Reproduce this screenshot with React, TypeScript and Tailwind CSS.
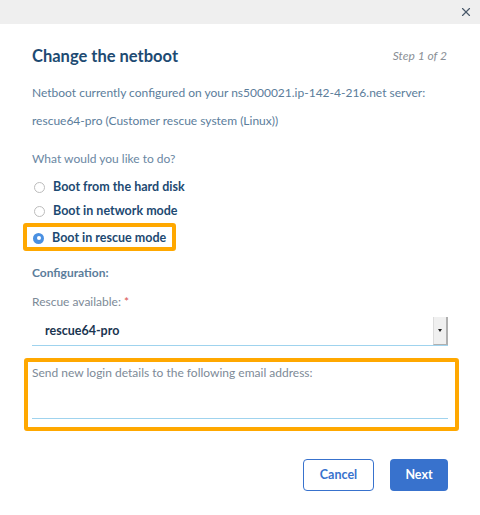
import { X } from 'lucide-react'

const Radio = ({ label, checked }: { label: string; checked?: boolean }) => (
  <label className="flex h-[16px] items-center gap-[8px] pl-[1px]">
    {checked ? (
      <span className="flex h-[11px] w-[11px] items-center justify-center rounded-full bg-[#4a90e2]">
        <span className="h-[4px] w-[4px] rounded-full bg-white" />
      </span>
    ) : (
      <span className="h-[11px] w-[11px] rounded-full border border-[#bcbcbc] bg-white" />
    )}
    <span className="text-[12.5px] leading-[16px] font-bold text-[#1d4a72]">{label}</span>
  </label>
)

export default function App() {
  return (
    <div
      className="h-[515px] w-[480px] overflow-hidden bg-white"
      style={{ fontFamily: 'Lato, "Open Sans", sans-serif' }}
    >
      <div className="flex h-[24px] items-center justify-end bg-[#efefef] pr-[7px]">
        <X size={14} strokeWidth={2} className="text-[#4a5a6a]" />
      </div>

      <div className="px-[32px] text-[12px] leading-[16px]">
        <div className="mt-[22px] flex h-[20px] items-center justify-between">
          <h1 className="text-[16.5px] leading-[20px] font-bold text-[#1d4a72]">Change the netboot</h1>
          <span className="pr-[1px] text-[12px] italic text-[#8a8f96]">Step 1 of 2</span>
        </div>

        <p className="mt-[19px] text-[#5b7d9b]">
          Netboot currently configured on your ns5000021.ip-142-4-216.net server:
        </p>
        <p className="mt-[12px] text-[#5b7d9b]">rescue64-pro (Customer rescue system (Linux))</p>

        <p className="mt-[22px] text-[#6a87a3]">What would you like to do?</p>

        <div className="mt-[12px] pl-[1px]">
          <Radio label="Boot from the hard disk" />
        </div>
        <div className="mt-[8px] pl-[1px]">
          <Radio label="Boot in network mode" />
        </div>
        <div className="mt-[4px] -ml-[9px] w-[153px] rounded-[3px] border-[4px] border-[#ffa800] pt-[3px] pb-[1px] pl-[5px]">
          <Radio label="Boot in rescue mode" checked />
        </div>

        <p className="mt-[14px] font-bold text-[#5b7d9b]">Configuration:</p>

        <p className="mt-[13px] text-[#7d8a97]">
          Rescue available: <span className="text-[#d9534f]">*</span>
        </p>

        <div className="mt-[7px] flex h-[29px] items-stretch border-b border-[#9fd3ee]">
          <span className="flex flex-1 items-center pl-[13px] text-[12.5px] font-bold text-[#1a3550]">
            rescue64-pro
          </span>
          <span className="flex w-[15px] items-center justify-center border-r-[2px] border-b border-l border-[#b0b0b0] border-l-[#dcdcdc] bg-[#f0f0f0]">
            <span className="h-0 w-0 border-x-[2px] border-t-[3px] border-x-transparent border-t-[#222]" />
          </span>
        </div>

        <div className="mt-[12px] -mr-[11px] -ml-[8px] h-[73px] rounded-[3px] border-[4px] border-[#ffa800] pr-[7px] pl-[4px]">
          <p className="mt-[3px] text-[#7d8a97]">Send new login details to the following email address:</p>
          <div className="mt-[37px] border-b border-[#9fd3ee]" />
        </div>

        <div className="mt-[28px] flex justify-end gap-[16px]">
          <button className="h-[32px] w-[71px] rounded-[4px] border border-[#3872cd] bg-white text-[12.5px] font-bold text-[#3872cd]">
            Cancel
          </button>
          <button className="h-[32px] w-[58px] rounded-[4px] bg-[#3872cd] text-[12.5px] font-bold text-white">
            Next
          </button>
        </div>
      </div>
    </div>
  )
}
